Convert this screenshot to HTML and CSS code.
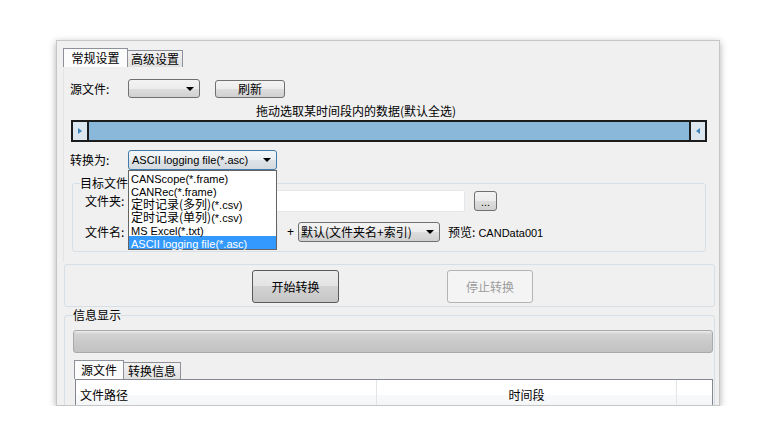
FILE: index.html
```html
<!DOCTYPE html>
<html lang="zh-CN">
<head>
<meta charset="utf-8">
<title>转换</title>
<link rel="stylesheet" href="styles.css">
</head>
<body>
<div class="stage">
  <div class="win">
    <div class="tabs">
      <div class="tab on w1">常规设置</div>
      <div class="tab w2">高级设置</div>
    </div>
    <div class="pane">
      <div class="row r1">
        <span class="lbl">源文件:</span>
        <div class="combo c-src"><span class="arrow"></span></div>
        <button class="btn b-refresh">刷新</button>
      </div>
      <div class="hint">拖动选取某时间段内的数据(默认全选)</div>
      <div class="slider">
        <div class="sbtn"><span class="tri-r"></span></div>
        <div class="strack"></div>
        <div class="sbtn"><span class="tri-l"></span></div>
      </div>
      <div class="row r3">
        <span class="lbl">转换为:</span>
        <div class="dd">
          <div class="combo focus c-fmt"><span class="t">ASCII logging file(*.asc)</span><span class="arrow"></span></div>
          <ul class="list">
            <li><span class="t">CANScope(*.frame)</span></li>
            <li><span class="t">CANRec(*.frame)</span></li>
            <li>定时记录(多列)<span class="t">(*.csv)</span></li>
            <li>定时记录(单列)<span class="t">(*.csv)</span></li>
            <li><span class="t">MS Excel(*.txt)</span></li>
            <li class="sel"><span class="t">ASCII logging file(*.asc)</span></li>
          </ul>
        </div>
      </div>
      <fieldset class="grp target">
        <legend>目标文件</legend>
        <div class="frow fa">
          <span class="lbl2">文件夹:</span>
          <div class="in in1"></div>
          <button class="btn b-dots"><span class="t">...</span></button>
        </div>
        <div class="frow fb">
          <span class="lbl2">文件名:</span>
          <div class="in in2"></div>
          <span class="plus t">+</span>
          <div class="combo c-name">默认(文件夹名+索引)<span class="arrow"></span></div>
          <span class="preview">预览:<span class="t"> CANData001</span></span>
        </div>
      </fieldset>
    </div>
    <div class="actions">
      <button class="btn b-start">开始转换</button>
      <button class="btn b-stop" disabled>停止转换</button>
    </div>
    <fieldset class="grp info">
      <legend>信息显示</legend>
      <div class="progress"></div>
      <div class="tabs tabs2">
        <div class="tab on w3">源文件</div>
        <div class="tab w4">转换信息</div>
      </div>
      <div class="table">
        <div class="th c1">文件路径</div>
        <div class="th c2">时间段</div>
        <div class="th c3"></div>
      </div>
    </fieldset>
  </div>
</div>
</body>
</html>
```
FILE: styles.css
```css
* { box-sizing: border-box; }
html, body { margin: 0; background: #fff; }
body {
  font-family: "Noto Sans CJK SC", sans-serif;
  font-size: 12px;
  line-height: 14px;
  color: #000;
}
.t { font-family: "Liberation Sans", "Noto Sans CJK SC", sans-serif; font-size: 11px; }

.stage { padding: 40px 0 0 56px; }
.win {
  width: 664px;
  height: 366px;
  border: 1px solid #c6c6c6;
  background: #f0f0f0;
  box-shadow: 0 2px 7px rgba(0, 0, 0, 0.32);
  overflow: hidden;
  padding: 7px 3px 0 6px;
}

/* tabs */
.tabs { display: flex; align-items: flex-end; height: 19px; }
.tab {
  height: 17px;
  border: 1px solid #8e9199;
  border-bottom: none;
  background: linear-gradient(#f2f2f2, #e1e1e1);
  text-align: center;
  line-height: 16px;
}
.tab.on { height: 19px; background: #fcfcfc; line-height: 18px; }
.w1 { width: 65px; }
.w2 { width: 55px; border-left: none; }
.w3 { width: 50px; }
.w4 { width: 57px; border-left: none; }

/* pane */
.pane {
  width: 652px;
  height: 195px;
  padding: 12px 0 0 6px;
  border-left: 1px solid #e4e4e4;
}
.row { display: flex; align-items: center; }
.r1 { height: 19px; }
.lbl { width: 58px; }

.combo {
  display: flex;
  align-items: center;
  padding: 0 5px 0 3px;
  border: 1px solid #707070;
  border-radius: 3px;
  background: linear-gradient(#f3f3f3 0, #ececec 50%, #dedede 50%, #d0d0d0 100%);
  white-space: nowrap;
}
.arrow {
  margin-left: auto;
  width: 0;
  height: 0;
  border-left: 4px solid transparent;
  border-right: 4px solid transparent;
  border-top: 4px solid #000;
}
.c-src { width: 72px; height: 19px; }

.btn {
  font: inherit;
  padding: 0;
  color: #000;
  border: 1px solid #707070;
  border-radius: 3px;
  background: linear-gradient(#f3f3f3 0, #ececec 50%, #dedede 50%, #d0d0d0 100%);
}
.b-refresh { margin-left: 15px; width: 70px; height: 18px; }

.hint { margin-top: 6px; padding-left: 186px; height: 14px; }

.slider {
  display: flex;
  margin: 2px 0 0 1px;
  width: 636px;
  height: 22px;
  border: 2px solid #1c1c1c;
}
.sbtn {
  width: 14px;
  background: #dce6ee;
  display: flex;
  align-items: center;
  justify-content: center;
}
.strack {
  flex: 1;
  background: #89b8da;
  border-left: 2px solid #1c1c1c;
  border-right: 2px solid #1c1c1c;
}
.tri-r {
  border-top: 3px solid transparent;
  border-bottom: 3px solid transparent;
  border-left: 4px solid #3f86b9;
}
.tri-l {
  border-top: 3px solid transparent;
  border-bottom: 3px solid transparent;
  border-right: 4px solid #3f86b9;
}

.r3 { margin-top: 8px; height: 20px; }
.dd { position: relative; }
.c-fmt {
  width: 149px;
  height: 20px;
  border-color: #3d7bad;
  background: linear-gradient(#f4f7fa 0, #eceff2 50%, #dfe4e8 50%, #d3d9de 100%);
}
.list {
  position: absolute;
  top: 100%;
  left: 0;
  z-index: 2;
  width: 149px;
  margin: 0;
  padding: 0;
  list-style: none;
  background: #fff;
  border: 1px solid #646464;
}
.list li { height: 13px; line-height: 13px; padding-left: 2px; white-space: nowrap; }
.list li.sel { background: #3399ff; color: #fff; }

/* group boxes */
.grp {
  margin: 0;
  min-width: 0;
  border: 1px solid #d5dfe5;
  border-radius: 3px;
}
.grp legend { padding: 0; line-height: 14px; }
.target {
  margin: 6px 0 0 2px;
  width: 634px;
  padding: 0 0 9px 12px;
}
.target legend { margin-left: -5px; }
.frow { display: flex; align-items: center; }
.lbl2 { width: 43px; }
.fa { height: 22px; }
.fb { margin-top: 10px; height: 20px; }
.in {
  background: #fff;
  border: 1px solid #e2e7ec;
  border-radius: 2px;
}
.in1 { width: 337px; height: 22px; }
.in2 { width: 150px; height: 20px; }
.b-dots { margin-left: 9px; width: 23px; height: 20px; line-height: 12px; }
.plus { margin: 0 4px 0 9px; font-size: 12px; }
.c-name { width: 142px; height: 20px; padding-left: 2px; }
.preview { margin-left: 8px; }

/* actions */
.actions {
  display: flex;
  align-items: flex-start;
  gap: 108px;
  margin: 2px 0 0 1px;
  width: 651px;
  height: 43px;
  padding: 5px 0 0 187px;
  border: 1px solid #d5dfe5;
  border-radius: 3px;
}
.b-start {
  width: 87px;
  height: 33px;
  border-color: #5a5a5a;
  background: linear-gradient(#ececec 0, #e3e3e3 50%, #d3d3d3 50%, #c6c6c6 100%);
}
.b-stop {
  width: 86px;
  height: 33px;
  color: #9c9c9c;
  border-color: #b4b4b4;
  background: #f4f4f4;
}

/* info */
.info {
  margin: 1px 0 0 1px;
  width: 651px;
  padding: 0 3px 0 8px;
}
.progress {
  margin-top: 8px;
  width: 640px;
  height: 23px;
  border: 1px solid #a9a9a9;
  border-radius: 3px;
  background: linear-gradient(#eeeeee 0, #d2d2d2 3px, #c8c8c8 60%, #c2c2c2 100%);
}
.tabs2 { margin: 7px 0 0 1px; }
.table {
  display: flex;
  margin-left: 2px;
  width: 638px;
  height: 40px;
  border: 1px solid #828790;
  background: #fff;
}
.th {
  height: 30px;
  line-height: 30px;
  background: linear-gradient(#ffffff 0, #ffffff 50%, #f8f9fa 50%, #f3f4f6 100%);
  border-right: 1px solid #e3e5e8;
}
.c1 { width: 301px; padding-left: 4px; }
.c2 { width: 300px; text-align: center; }
.c3 { flex: 1; border-right: none; }
```
